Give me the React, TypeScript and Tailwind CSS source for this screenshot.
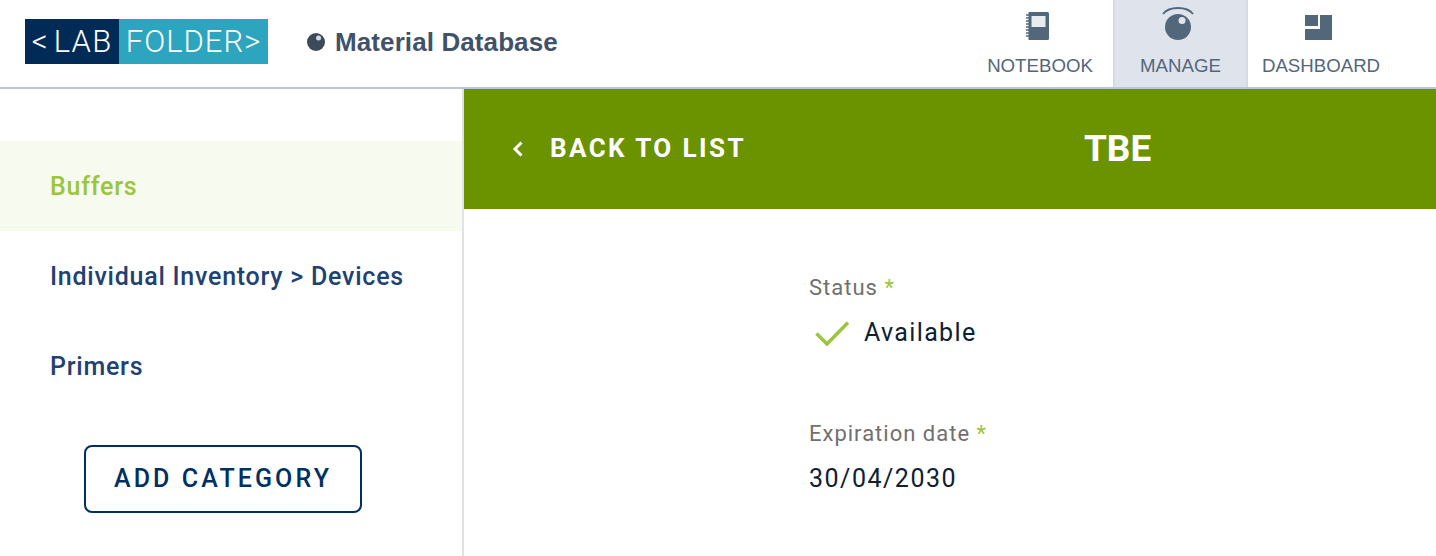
const NotebookIcon = () => (
  <svg width="23" height="28" viewBox="0 0 23 28">
    <path d="M2.5 0h19a1.5 1.5 0 0 1 1.5 1.5v25a1.5 1.5 0 0 1-1.5 1.5h-19z" fill="#53677a" />
    <rect x="5.5" y="4" width="14" height="11" fill="#e8ebef" />
    <path d="M0 3h3M0 6h3M0 9h3M0 12h3M0 15h3M0 18h3M0 21h3M0 24h3" stroke="#53677a" strokeWidth="1.5" />
  </svg>
);

const ManageIcon = () => (
  <svg width="32" height="36" viewBox="0 0 32 36">
    <path d="M1 10C7 2 25 2 31 10" fill="none" stroke="#53677a" strokeWidth="1.8" />
    <circle cx="16" cy="23" r="13" fill="#53677a" />
    <circle cx="20" cy="16.5" r="3.5" fill="#e0e5ec" />
  </svg>
);

const DashboardIcon = () => (
  <svg width="27" height="25" viewBox="0 0 27 25">
    <path d="M0 0h13v11H0z M15 0H27v25H0V14h15z" fill="#53677a" />
  </svg>
);

const navItems = [
  { label: "NOTEBOOK", icon: <NotebookIcon />, width: "w-[146px]", active: false },
  { label: "MANAGE", icon: <ManageIcon />, width: "w-[135px]", active: true },
  { label: "DASHBOARD", icon: <DashboardIcon />, width: "w-[146px]", active: false },
];

const categories = [
  { label: "Buffers", active: true },
  { label: "Individual Inventory > Devices", active: false },
  { label: "Primers", active: false },
];

export default function App() {
  return (
    <div className="h-[556px] w-[1436px] overflow-hidden bg-white font-['Roboto',sans-serif]">
      <header className="flex h-[89px] items-stretch justify-between border-b-2 border-[#b9c6d3] pl-[25px]">
        <div className="flex items-center">
          <div className="mb-[4px] flex h-[45px] w-[243px] items-center text-[31px] font-light text-white">
            <div className="flex h-full w-[94px] items-center justify-center bg-[#002b57] pt-[2px] tracking-[1.2px]">
              <span className="mr-[5px]">&lt;</span>LAB
            </div>
            <div className="flex h-full flex-1 items-center justify-center bg-[#2ea5bf] pt-[2px] tracking-[1px]">FOLDER&gt;</div>
          </div>
          <svg width="18" height="18" viewBox="0 0 18 18" className="mb-[3px] ml-[39px]">
            <circle cx="9" cy="9" r="9" fill="#3c4a5c" />
            <circle cx="11.5" cy="5" r="2.5" fill="#d5dbe2" />
          </svg>
          <span className="mb-[2px] ml-[10px] font-['Liberation_Sans',sans-serif] text-[26px] font-bold tracking-[0.1px] text-[#3f5269]">Material Database</span>
        </div>
        <nav className="mr-[42px] flex">
          {navItems.map((item) => (
            <div
              key={item.label}
              className={
                item.active
                  ? `flex flex-col items-center ${item.width} bg-[#dfe4ec] border-x-2 border-[#d3dbe4]`
                  : `flex flex-col items-center ${item.width}`
              }
            >
              <div className="flex h-[52px] items-end justify-center pb-[12px] pr-[6px]">{item.icon}</div>
              <span className="mt-[2px] font-['Liberation_Sans',sans-serif] text-[18.67px] leading-[24px] text-[#53677a]">{item.label}</span>
            </div>
          ))}
        </nav>
      </header>
      <div className="flex h-[467px]">
        <aside className="w-[464px] shrink-0 border-r-2 border-[#e2e2e2] pt-[52px]">
          {categories.map((cat) => (
            <div
              key={cat.label}
              className={
                cat.active
                  ? "flex h-[90px] items-center bg-[#f7faef] pl-[50px] pt-[2px] text-[25px] font-medium tracking-[0.75px] text-[#9bc53d]"
                  : "flex h-[90px] items-center pl-[50px] pt-[2px] text-[25px] font-medium tracking-[0.75px] text-[#1f4272]"
              }
            >
              {cat.label}
            </div>
          ))}
          <div className="mt-[34px] pl-[84px]">
            <button className="h-[68px] w-[278px] rounded-lg border-2 border-[#002f63] text-[25px] font-medium tracking-[3.1px] text-[#002f63]">
              ADD CATEGORY
            </button>
          </div>
        </aside>
        <main className="flex-1">
          <div className="relative flex h-[120px] items-center bg-[#6b9300] pl-[47px] text-white">
            <svg width="14" height="18" viewBox="0 0 14 18" fill="none" stroke="white" strokeWidth="3">
              <path d="M10.5 2.5 4 9l6.5 6.5" />
            </svg>
            <span className="mb-[2px] ml-[25px] text-[26px] font-bold tracking-[2.4px]">BACK TO LIST</span>
            <span className="ml-[338px] text-[37px] font-bold">TBE</span>
          </div>
          <div className="pl-[345px] pt-[64px]">
            <div className="text-[22px] leading-[30px] tracking-[1px] text-[#70706e]">
              Status <span className="text-[#9bc53d]">*</span>
            </div>
            <div className="mt-[15px] flex items-center text-[25px] leading-[30px] tracking-[1.35px] text-[#0e2033]">
              <svg width="34" height="26" viewBox="0 0 34 26" fill="none" stroke="#9bc53d" strokeWidth="3.5" className="ml-[6px]">
                <path d="M1.5 13.5 12 24 33 2.5" />
              </svg>
              <span className="ml-[15px]">Available</span>
            </div>
            <div className="mt-[71px] text-[22px] leading-[30px] tracking-[1px] text-[#70706e]">
              Expiration date <span className="text-[#9bc53d]">*</span>
            </div>
            <div className="mt-[15px] text-[25px] leading-[30px] tracking-[1.5px] text-[#0e2033]">30/04/2030</div>
          </div>
        </main>
      </div>
    </div>
  );
}
